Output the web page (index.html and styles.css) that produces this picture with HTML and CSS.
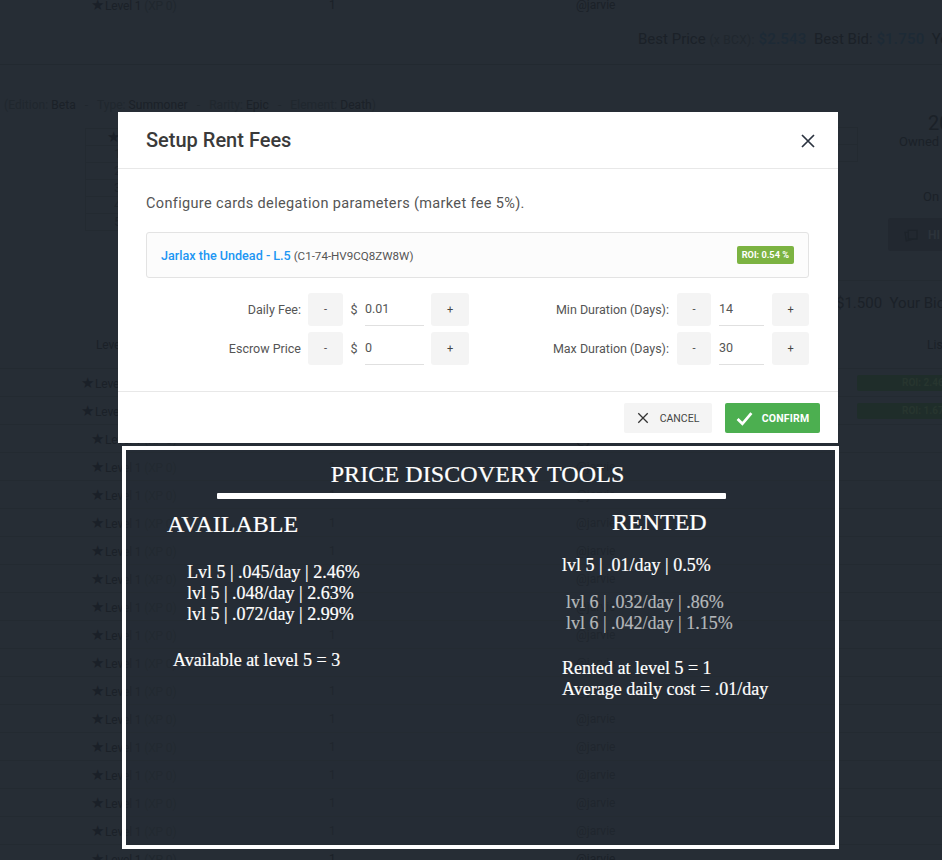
FILE: index.html
```html
<!DOCTYPE html>
<html lang="en">
<head>
  <meta charset="UTF-8" />
  <title>Setup Rent Fees</title>
  <link rel="stylesheet" href="styles.css">
</head>
<body>
  <!-- page behind the dialog -->
  <div class="page">
    <div class="row row-top">
      <span class="col-level"><span class="star">★</span>Level 1 <i>(XP 0)</i></span>
      <span class="col-qty">1</span>
      <span class="col-user">@jarvie</span>
    </div>
    <div class="price-line">
      Best Price <small>(x BCX):</small> <b>$2.543</b>&nbsp; Best Bid: <b>$1.750</b>&nbsp; Your
    </div>
    <div class="card-meta">
      <i>(Edition:</i> Beta <i class="sep">-</i> <i>Type:</i> Summoner <i class="sep">-</i> <i>Rarity:</i> Epic <i class="sep">-</i> <i>Element:</i> Death<i>)</i>
    </div>
    <div class="stats-left">
      <div class="stats-head"><span class="star">★</span></div>
      <div>1</div>
      <div>2</div>
      <div>3</div>
      <div>4</div>
      <div>5</div>
    </div>
    <div class="stats-right"></div>
    <div class="side-box">
      <div class="big">20</div>
      <div>Owned c</div>
    </div>
    <div class="side-on">On r</div>
    <div class="side-btn">
      <svg viewBox="0 0 24 24" width="16" height="16" fill="none" stroke="#1d232a" stroke-width="2"><path d="M8 5h13v13H8zM8 8H3l2 13 10-3"/></svg>
      HI
    </div>
    <div class="price-line price-line-2">$1.500&nbsp; Your Bic</div>
    <div class="table-head">
      <span class="col-level">Level</span>
      <span class="col-list">Lis</span>
    </div>
    <div id="rows"></div>
  </div>

  <div class="modal">
    <div class="modal-head">
      <h2>Setup Rent Fees</h2>
      <svg class="close" viewBox="0 0 14 14" width="14" height="14"><path d="M1 1l12 12M13 1L1 13" stroke="#2b3340" stroke-width="1.7" fill="none"/></svg>
    </div>
    <div class="modal-body">
      <p class="intro">Configure cards delegation parameters (market fee 5%).</p>
      <div class="card-box">
        <div><a href="#">Jarlax the Undead - L.5</a> (C1-74-HV9CQ8ZW8W)</div>
        <span class="roi">ROI: 0.54 %</span>
      </div>
      <div class="fields">
        <div class="field-col left">
          <div class="field">
            <label>Daily Fee:</label>
            <button class="step minus">-</button>
            <span class="dollar">$</span>
            <span class="num">0.01</span>
            <button class="step plus">+</button>
          </div>
          <div class="field">
            <label>Escrow Price</label>
            <button class="step minus">-</button>
            <span class="dollar">$</span>
            <span class="num">0</span>
            <button class="step plus">+</button>
          </div>
        </div>
        <div class="field-col right">
          <div class="field">
            <label>Min Duration (Days):</label>
            <button class="step minus">-</button>
            <span class="num">14</span>
            <button class="step plus">+</button>
          </div>
          <div class="field">
            <label>Max Duration (Days):</label>
            <button class="step minus">-</button>
            <span class="num">30</span>
            <button class="step plus">+</button>
          </div>
        </div>
      </div>
    </div>
    <div class="modal-foot">
      <button class="btn-cancel">
        <svg viewBox="0 0 14 14" width="12" height="12"><path d="M1.5 1.5l11 11M12.5 1.5l-11 11" stroke="#333" stroke-width="1.5" fill="none"/></svg>
        CANCEL
      </button>
      <button class="btn-confirm">
        <svg viewBox="0 0 16 14" width="17" height="15"><path d="M1.5 7.5l4.5 4.5L14.5 2" stroke="#fff" stroke-width="2.6" fill="none"/></svg>
        CONFIRM
      </button>
    </div>
  </div>

  <!-- pasted notes panel -->
  <div class="notes">
    <h3 class="notes-title">PRICE DISCOVERY TOOLS</h3>
    <div class="notes-rule"></div>
    <div class="notes-cols">
      <div class="notes-left">
        <div class="col-title">AVAILABLE</div>
        <div class="list">
          <div>Lvl 5 | .045/day | 2.46%</div>
          <div>lvl 5 | .048/day | 2.63%</div>
          <div>lvl 5 | .072/day | 2.99%</div>
        </div>
        <div class="total">Available at level 5 = 3</div>
      </div>
      <div class="notes-right">
        <div class="col-title">RENTED</div>
        <div class="list-one">lvl 5 | .01/day | 0.5%</div>
        <div class="list-grey">
          <div>lvl 6 | .032/day | .86%</div>
          <div>lvl 6 | .042/day | 1.15%</div>
        </div>
        <div class="total">
          <div>Rented at level 5 = 1</div>
          <div>Average daily cost = .01/day</div>
        </div>
      </div>
    </div>
  </div>

  <script>
    // background market rows
    var rows = document.getElementById('rows');
    var html = '';
    for (var i = 0; i < 18; i++) {
      var listed = i < 2;
      html += '<div class="row' + (listed ? ' listed' : '') + '">' +
        '<span class="col-level"><span class="star">★</span>Level 1 <i>(XP 0)</i></span>' +
        '<span class="col-qty">1</span>' +
        '<span class="col-user">@jarvie</span>' +
        (listed ? '<span class="roi-dark">ROI: ' + (i == 0 ? '2.46' : '1.67') + ' %</span>' : '') +
        '</div>';
    }
    rows.innerHTML = html;
  </script>
</body>
</html>
```

FILE: styles.css
```css
html, body {
  margin: 0;
  height: 860px;
  overflow: hidden;
}
body {
  font-family: Roboto, "Liberation Sans", sans-serif;
  background-color: #262d35;
  color: #1b2128;
  position: relative;
}
i {
  font-style: normal;
  color: #20272e;
}

/* background page */
.page {
  height: 860px;
  overflow: hidden;
  font-size: 12px;
}
.row {
  display: flex;
  align-items: center;
  height: 27px;
  border-bottom: 1px solid #232a31;
  position: relative;
  white-space: nowrap;
}
.row-top {
  height: 10px;
  border: 0;
}
.col-level {
  width: 329px;
  padding-left: 91px;
  box-sizing: border-box;
  letter-spacing: -0.15px;
}
.listed .col-level {
  padding-left: 81px;
}
.col-qty {
  width: 247px;
}
.star {
  display: inline-block;
  width: 14px;
  font-size: 15px;
  color: #1a2028;
}
.price-line {
  margin-top: 20px;
  padding-left: 638px;
  height: 34px;
  border-bottom: 1px solid #222930;
  font-size: 15px;
  white-space: nowrap;
}
.price-line small {
  font-size: 12px;
  letter-spacing: 0.3px;
  color: #20272e;
}
.price-line b {
  font-weight: 500;
  color: #1d2a36;
  letter-spacing: 0.2px;
}
.card-meta {
  margin-top: 33px;
  padding-left: 4px;
  height: 200px;
  letter-spacing: 0.05px;
}
.sep {
  margin: 0 6px;
}
.stats-left {
  position: absolute;
  left: 85px;
  top: 128px;
  width: 33px;
  border: 1px solid #232a31;
  border-right: 0;
  font-size: 13px;
  color: #1f252c;
}
.stats-left div {
  height: 16px;
  line-height: 16px;
  border-top: 1px solid #232a31;
  padding-left: 28px;
  overflow: hidden;
}
.stats-left .stats-head {
  border-top: 0;
  padding-left: 21px;
}
.stats-right {
  position: absolute;
  left: 838px;
  top: 127px;
  width: 19px;
  height: 16px;
  border: 1px solid #232a31;
  border-left: 0;
}
.stats-right::after {
  content: "";
  position: absolute;
  left: 0;
  top: 17px;
  width: 19px;
  height: 16px;
  border: 1px solid #232a31;
  border-left: 0;
  border-top: 0;
}
.side-box {
  position: absolute;
  left: 899px;
  top: 113px;
  white-space: nowrap;
  font-size: 13px;
  line-height: 18px;
}
.side-box .big {
  font-size: 20px;
  line-height: 20px;
  padding-left: 29px;
}
.side-on {
  position: absolute;
  left: 923px;
  top: 189px;
  white-space: nowrap;
  font-size: 13px;
}
.side-btn {
  position: absolute;
  left: 888px;
  top: 218px;
  width: 54px;
  height: 33px;
  background-color: #222830;
  border-radius: 3px 0 0 3px;
  display: flex;
  align-items: center;
  gap: 9px;
  padding-left: 15px;
  box-sizing: border-box;
  font-weight: 700;
  color: #2c333b;
  overflow: hidden;
}
.price-line-2 {
  position: absolute;
  left: 838px;
  top: 280px;
  margin: 0;
  padding: 13px 0 0;
  text-indent: -2px;
  border: 0;
  border-top: 1px solid #232a31;
  width: 104px;
  height: auto;
  overflow: hidden;
}
.table-head {
  position: absolute;
  left: 0;
  top: 338px;
  width: 100%;
  height: 31px;
  box-sizing: border-box;
  border-bottom: 1px solid #232a31;
  display: flex;
}
.table-head .col-level {
  padding-left: 96px;
}
.col-list {
  position: absolute;
  left: 927px;
}
#rows {
  position: absolute;
  left: 0;
  top: 369px;
  width: 100%;
}
.roi-dark {
  position: absolute;
  left: 857px;
  top: 6px;
  width: 130px;
  height: 16px;
  box-sizing: border-box;
  padding-left: 45px;
  border-radius: 2px;
  background-color: #1f2d2a;
  color: #27352f;
  font-size: 10px;
  font-weight: 700;
  line-height: 16px;
}

/* dialog */
.modal {
  position: absolute;
  left: 118px;
  top: 112px;
  width: 720px;
  height: 331px;
  background-color: white;
  display: flex;
  flex-direction: column;
  color: #555;
}
.modal-head {
  height: 56px;
  border-bottom: 1px solid #e8e8e8;
  padding: 0 23px 0 28px;
  display: flex;
  justify-content: space-between;
  align-items: center;
}
.modal-head h2 {
  margin: 0;
  font-size: 20px;
  font-weight: 500;
  color: #3a3a3a;
}
.close {
  margin-top: 1px;
}
.modal-body {
  flex: 1;
  padding: 0 29px 0 28px;
}
.intro {
  margin: 26px 0 19px;
  font-size: 14.5px;
  line-height: 18px;
  letter-spacing: 0.35px;
}
.card-box {
  height: 46px;
  box-sizing: border-box;
  border: 1px solid #e3e3e3;
  border-radius: 3px;
  background-color: #fcfcfc;
  padding: 0 14px;
  display: flex;
  justify-content: space-between;
  align-items: center;
  font-size: 11.6px;
}
.card-box a {
  font-size: 12.6px;
  color: #2196f3;
  font-weight: 500;
  text-decoration: none;
}
.roi {
  background-color: #7cb342;
  color: white;
  font-size: 9.2px;
  font-weight: 700;
  border-radius: 2px;
  padding: 0 5px;
  height: 18px;
  line-height: 18px;
}
.fields {
  display: flex;
  justify-content: space-between;
  margin-top: 15px;
}
.field-col {
  display: flex;
  flex-direction: column;
  gap: 6px;
}
.field {
  display: flex;
  align-items: center;
  height: 33px;
  font-size: 12.5px;
}
.field label {
  text-align: right;
}
.left label {
  width: 155px;
  margin-right: 7px;
}
.right label {
  width: 150px;
  margin-right: 8px;
}
.step {
  border: 0;
  padding: 0;
  height: 33px;
  background-color: #f4f4f4;
  border-radius: 3px;
  color: #444;
  font: 11px Roboto, sans-serif;
}
.left .minus { width: 35px; }
.left .plus { width: 38px; }
.right .minus { width: 34px; }
.right .plus { width: 37px; }
.dollar {
  width: 22px;
  text-align: center;
}
.num {
  height: 32px;
  line-height: 32px;
  border-bottom: 1px solid #e0e0e0;
}
.left .num {
  width: 59px;
  margin-right: 7px;
}
.right .num {
  width: 45px;
  margin: 0 8px;
}
.modal-foot {
  height: 52px;
  border-top: 1px solid #e8e8e8;
  display: flex;
  justify-content: flex-end;
  gap: 13px;
  padding: 11px 18px 0 0;
  box-sizing: border-box;
}
.modal-foot button {
  height: 30px;
  border: 0;
  border-radius: 2px;
  font: 10.5px Roboto, sans-serif;
  display: flex;
  align-items: center;
  justify-content: center;
}
.btn-cancel {
  width: 88px;
  gap: 11px;
  background-color: #f4f4f4;
  color: #444;
}
.modal-foot .btn-confirm {
  width: 95px;
  gap: 9px;
  background-color: #4caf50;
  color: white;
  font-weight: 700;
  letter-spacing: 0.2px;
}

/* pasted notes */
.notes {
  position: absolute;
  left: 122px;
  top: 446px;
  width: 717px;
  height: 403px;
  box-sizing: border-box;
  border: 4px solid white;
  background-color: rgba(38, 45, 53, 0.45);
  color: white;
  font-family: "Liberation Serif", serif;
  font-size: 18px;
  line-height: 21px;
  -webkit-text-stroke: 0.2px;
}
.notes-title {
  margin: 12px 0 0;
  font-size: 24px;
  line-height: 24px;
  font-weight: 400;
  letter-spacing: 0.1px;
  text-align: center;
  padding-right: 6px;
}
.notes-rule {
  width: 509px;
  height: 6px;
  border-radius: 1px;
  background-color: white;
  margin: 7px 0 0 91px;
}
.notes-cols {
  display: flex;
}
.notes-left {
  width: 435px;
  padding-top: 11px;
}
.col-title {
  font-size: 24px;
  line-height: 28px;
}
.notes-left .col-title {
  padding-left: 41px;
}
.notes-left .list {
  margin: 24px 0 0 61px;
}
.notes-left .total {
  margin: 25px 0 0 47px;
}
.notes-right {
  padding-top: 9px;
  margin-left: 1px;
}
.notes-right .col-title {
  padding-left: 50px;
}
.list-one {
  margin-top: 19px;
}
.list-grey {
  margin: 16px 0 0 4px;
  color: #b4b7ba;
}
.notes-right .total {
  margin-top: 24px;
}
```
